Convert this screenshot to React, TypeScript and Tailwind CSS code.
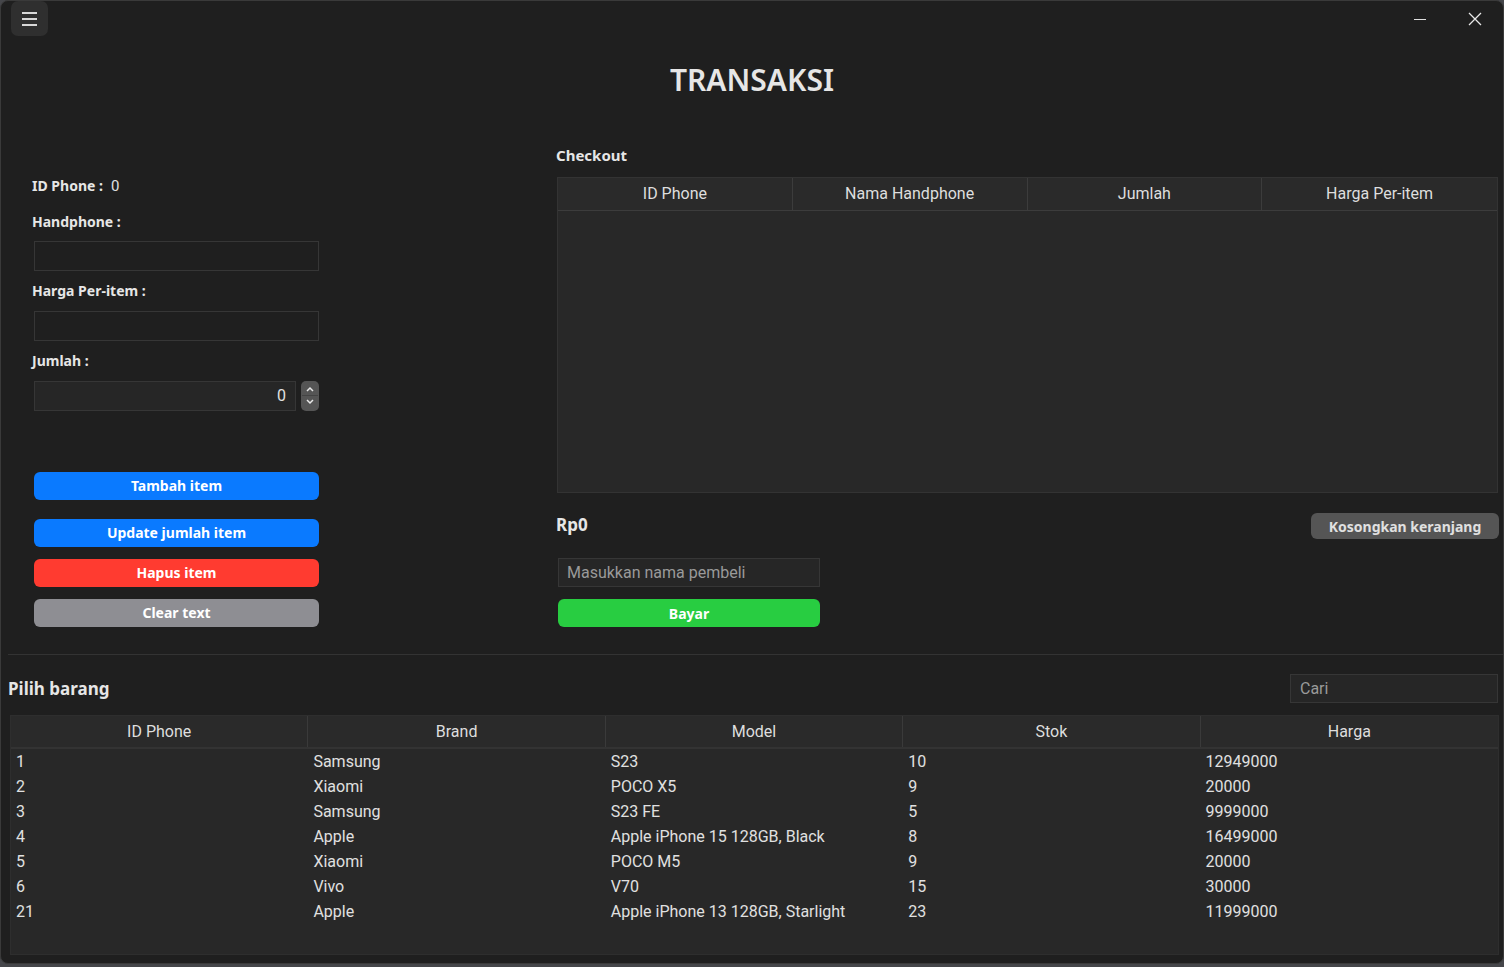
import React from "react";

const products = [
  { id: "1", brand: "Samsung", model: "S23", stok: "10", harga: "12949000" },
  { id: "2", brand: "Xiaomi", model: "POCO X5", stok: "9", harga: "20000" },
  { id: "3", brand: "Samsung", model: "S23 FE", stok: "5", harga: "9999000" },
  { id: "4", brand: "Apple", model: "Apple iPhone 15 128GB, Black", stok: "8", harga: "16499000" },
  { id: "5", brand: "Xiaomi", model: "POCO M5", stok: "9", harga: "20000" },
  { id: "6", brand: "Vivo", model: "V70", stok: "15", harga: "30000" },
  { id: "21", brand: "Apple", model: "Apple iPhone 13 128GB, Starlight", stok: "23", harga: "11999000" },
];

const label = "text-[14px] leading-[20px] font-bold text-[#e6e6e6] font-['Noto_Sans',sans-serif]";
const btn =
  "h-[28px] w-[285px] ml-[2px] rounded-[6px] text-[14px] font-bold text-white font-['Noto_Sans',sans-serif] flex items-center justify-center";

export default function App() {
  return (
    <div className="w-[1504px] h-[967px] bg-[#45464a] font-['Roboto',sans-serif]">
      <div className="w-[1504px] h-[964px] bg-[#1f1f1f] border border-[#3a3a3a] rounded-[8px] overflow-hidden flex flex-col">
        {/* title bar */}
        <div className="h-[35px] flex items-start justify-between">
          <button className="ml-[10px] w-[37px] h-[35px] rounded-[7px] bg-[#2f2f2f] flex flex-col items-center justify-center gap-[4px]">
            <span className="block w-[15px] h-[2px] bg-[#d8d8d8]" />
            <span className="block w-[15px] h-[2px] bg-[#d8d8d8]" />
            <span className="block w-[15px] h-[2px] bg-[#d8d8d8]" />
          </button>
          <div className="flex items-center h-[36px] mr-[21px] gap-[41px]">
            <svg width="14" height="14" viewBox="0 0 14 14">
              <path d="M1 7.5h12" stroke="#e0e0e0" strokeWidth="1.2" />
            </svg>
            <svg width="14" height="14" viewBox="0 0 14 14">
              <path d="M1 1l12 12M13 1L1 13" stroke="#e8e8e8" strokeWidth="1.3" />
            </svg>
          </div>
        </div>

        {/* heading */}
        <h1 className="mt-[26px] text-center text-[30px] leading-[36px] font-semibold text-[#e6e6e6] font-['Noto_Sans',sans-serif]">
          TRANSAKSI
        </h1>

        {/* main */}
        <div className="mt-[47px] flex items-start">
          {/* left form */}
          <div className="ml-[31px] w-[290px] flex flex-col pt-[30px]">
            <div className="flex items-center gap-[8px]">
              <span className={label}>ID Phone :</span>
              <span className="text-[15px] text-[#e0e0e0]">0</span>
            </div>
            <div className={`${label} mt-[14px]`}>Handphone :</div>
            <div className="mt-[9px] ml-[2px] w-[285px] h-[30px] border border-[#363636] bg-[#1f1f1f]" />
            <div className={`${label} mt-[10px]`}>Harga Per-item :</div>
            <div className="mt-[10px] ml-[2px] w-[285px] h-[30px] border border-[#363636] bg-[#1f1f1f]" />
            <div className={`${label} mt-[10px]`}>Jumlah :</div>
            <div className="mt-[10px] ml-[2px] flex items-center gap-[5px]">
              <div className="w-[262px] h-[30px] border border-[#363636] bg-[#262626] flex items-center justify-end pr-[9px] text-[16px] text-[#e0e0e0]">
                0
              </div>
              <div className="w-[18px] h-[30px] rounded-[5px] bg-[#555555] flex flex-col items-center justify-center">
                <svg width="10" height="12" viewBox="0 0 10 12">
                  <path d="M2 8l3-3 3 3" stroke="#e8e8e8" strokeWidth="1.5" fill="none" />
                </svg>
                <div className="w-[16px] h-[1px] bg-[#444]" />
                <svg width="10" height="12" viewBox="0 0 10 12">
                  <path d="M2 4l3 3 3-3" stroke="#e8e8e8" strokeWidth="1.5" fill="none" />
                </svg>
              </div>
            </div>
            <button className={`${btn} mt-[61px] bg-[#0a7aff]`}>Tambah item</button>
            <button className={`${btn} mt-[19px] bg-[#0a7aff]`}>Update jumlah item</button>
            <button className={`${btn} mt-[12px] bg-[#ff3b30]`}>Hapus item</button>
            <button className={`${btn} mt-[12px] bg-[#8e8e93]`}>Clear text</button>
          </div>

          {/* checkout */}
          <div className="ml-[234px] w-[943px] flex flex-col">
            <div className="text-[15px] leading-[20px] font-bold text-[#e6e6e6] font-['Noto_Sans',sans-serif]">
              Checkout
            </div>
            <div className="mt-[12px] ml-[1px] w-[941px] h-[316px] bg-[#282828] border border-[#333] flex flex-col">
              <div className="h-[33px] grid grid-cols-4 border-b border-[#3c3c3c] bg-[#2a2a2a]">
                {["ID Phone", "Nama Handphone", "Jumlah", "Harga Per-item"].map((h, i) => (
                  <div
                    key={h}
                    className={`flex items-center justify-center text-[16px] text-[#dedede] ${i < 3 ? "border-r border-[#3c3c3c]" : ""}`}
                  >
                    {h}
                  </div>
                ))}
              </div>
            </div>
            <div className="mt-[20px] flex items-start justify-between">
              <div className="text-[17px] leading-[24px] font-bold text-[#e6e6e6] font-['Noto_Sans',sans-serif]">Rp0</div>
              <button className="w-[188px] h-[26px] rounded-[6px] bg-[#555555] text-[14px] font-bold text-[#e0e0e0] font-['Noto_Sans',sans-serif] flex items-center justify-center">
                Kosongkan keranjang
              </button>
            </div>
            <div className="mt-[19px] ml-[2px] w-[262px] h-[29px] bg-[#262626] border border-[#363636] flex items-center px-[8px] text-[16px] text-[#9a9a9a]">
              Masukkan nama pembeli
            </div>
            <button className="mt-[12px] ml-[2px] w-[262px] h-[28px] rounded-[6px] bg-[#28cd41] text-[14px] font-bold text-white font-['Noto_Sans',sans-serif] flex items-center justify-center">
              Bayar
            </button>
          </div>
        </div>

        {/* divider */}
        <div className="mt-[27px] ml-[7px] h-[1px] bg-[#333]" />

        {/* pilih barang */}
        <div className="mt-[19px] flex items-center justify-between pl-[7px] pr-[5px]">
          <div className="text-[17px] leading-[24px] font-bold text-[#e6e6e6] font-['Noto_Sans',sans-serif]">
            Pilih barang
          </div>
          <div className="w-[208px] h-[29px] bg-[#262626] border border-[#363636] flex items-center px-[9px] text-[16px] text-[#9a9a9a]">
            Cari
          </div>
        </div>

        <div className="mt-[12px] ml-[9px] w-[1489px] h-[240px] bg-[#282828] border border-[#2e2e2e] flex flex-col">
          <div className="h-[33px] grid grid-cols-5 border-b-[2px] border-[#333] bg-[#2a2a2a]">
            {["ID Phone", "Brand", "Model", "Stok", "Harga"].map((h, i) => (
              <div
                key={h}
                className={`flex items-center justify-center text-[16px] text-[#dedede] ${i < 4 ? "border-r border-[#3a3a3a]" : ""}`}
              >
                {h}
              </div>
            ))}
          </div>
          {products.map((p) => (
            <div key={p.id} className="h-[25px] grid grid-cols-5 text-[16px] text-[#e0e0e0]">
              {[p.id, p.brand, p.model, p.stok, p.harga].map((c, i) => (
                <div key={i} className="flex items-center pl-[5px]">
                  {c}
                </div>
              ))}
            </div>
          ))}
        </div>
      </div>
    </div>
  );
}
